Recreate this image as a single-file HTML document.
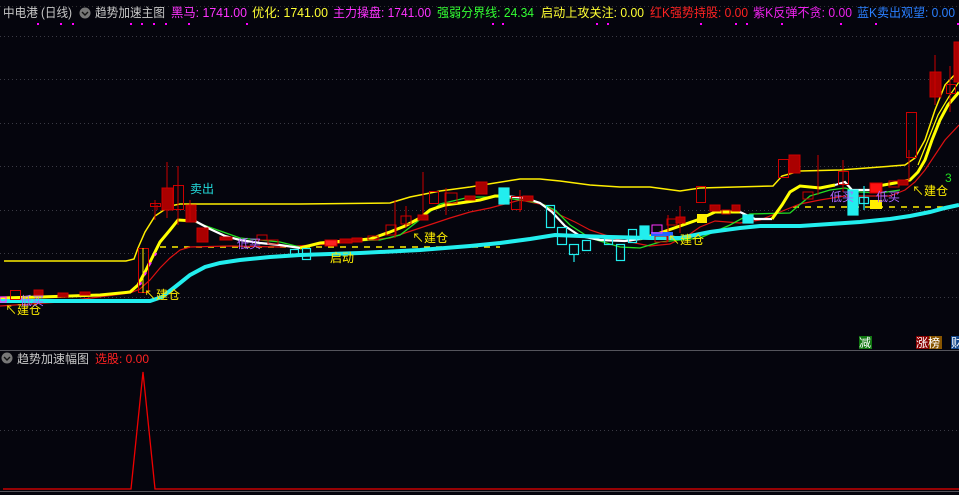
<!DOCTYPE html>
<html><head><meta charset="utf-8">
<style>
html,body{margin:0;padding:0;background:#05050d;}
body{width:959px;height:495px;overflow:hidden;position:relative;font-family:"Liberation Sans","Noto Sans CJK SC",sans-serif;}
svg{position:absolute;left:0;top:0;}
text{font-family:"Liberation Sans","Noto Sans CJK SC",sans-serif;}
</style></head><body>
<svg width="959" height="495" viewBox="0 0 959 495">
<rect width="959" height="495" fill="#05050d"/>
<g stroke="#3a3a44" stroke-dasharray="1 3" stroke-width="1">
<line x1="0" y1="36.5" x2="959" y2="36.5"/><line x1="0" y1="79.5" x2="959" y2="79.5"/>
<line x1="0" y1="123.5" x2="959" y2="123.5"/><line x1="0" y1="166.5" x2="959" y2="166.5"/>
<line x1="0" y1="210.5" x2="959" y2="210.5"/><line x1="0" y1="253.5" x2="959" y2="253.5"/>
<line x1="0" y1="297.5" x2="959" y2="297.5"/><line x1="0" y1="430.5" x2="959" y2="430.5"/>
</g>
<line x1="0" y1="350.5" x2="959" y2="350.5" stroke="#55555c"/>
<line x1="0" y1="491.5" x2="959" y2="491.5" stroke="#55555c"/>
<line x1="0" y1="6.5" x2="959" y2="6.5" stroke="#333" stroke-dasharray="1 3"/>

<g font-size="12.5" lengthAdjust="spacingAndGlyphs">
<text x="3" y="17" fill="#c8c8c8" textLength="69" lengthAdjust="spacingAndGlyphs">中电港 (日线)</text>
<circle cx="85" cy="13" r="5.5" fill="#777"/><path d="M82 12 l3 3 l3 -3" stroke="#111" stroke-width="1.4" fill="none"/>
<text x="95" y="17" fill="#c8c8c8" textLength="70" lengthAdjust="spacingAndGlyphs">趋势加速主图</text>
<text x="171" y="17" fill="#ff33ff" textLength="76" lengthAdjust="spacingAndGlyphs">黑马: 1741.00</text>
<text x="252" y="17" fill="#ffff33" textLength="76" lengthAdjust="spacingAndGlyphs">优化: 1741.00</text>
<text x="333" y="17" fill="#ff33ff" textLength="98" lengthAdjust="spacingAndGlyphs">主力操盘: 1741.00</text>
<text x="437" y="17" fill="#33ff33" textLength="97" lengthAdjust="spacingAndGlyphs">强弱分界线: 24.34</text>
<text x="541" y="17" fill="#ffff33" textLength="103" lengthAdjust="spacingAndGlyphs">启动上攻关注: 0.00</text>
<text x="650" y="17" fill="#ff2222" textLength="98" lengthAdjust="spacingAndGlyphs">红K强势持股: 0.00</text>
<text x="753" y="17" fill="#ee22ee" textLength="99" lengthAdjust="spacingAndGlyphs">紫K反弹不贪: 0.00</text>
<text x="857" y="17" fill="#2a7fff" textLength="98" lengthAdjust="spacingAndGlyphs">蓝K卖出观望: 0.00</text>
</g>
<g fill="#ff00ff">
<rect x="37" y="23" width="2" height="2"/><rect x="60" y="23" width="2" height="2"/><rect x="72" y="23" width="2" height="2"/>
<rect x="130" y="23" width="2" height="2"/><rect x="141" y="23" width="2" height="2"/><rect x="153" y="23" width="2" height="2"/><rect x="165" y="23" width="2" height="2"/>
<rect x="188" y="23" width="2" height="2"/><rect x="246" y="23" width="2" height="2"/>
<rect x="492" y="23" width="2" height="2"/><rect x="502" y="23" width="2" height="2"/><rect x="596" y="23" width="2" height="2"/><rect x="607" y="23" width="2" height="2"/>
<rect x="700" y="23" width="2" height="2"/><rect x="735" y="23" width="2" height="2"/><rect x="746" y="23" width="2" height="2"/><rect x="781" y="23" width="2" height="2"/>
<rect x="840" y="23" width="2" height="2"/><rect x="875" y="23" width="2" height="2"/><rect x="957" y="23" width="2" height="2"/>
</g>

<path d="M160 247 H500" stroke="#ffee00" stroke-width="1.5" stroke-dasharray="6 6"/>
<path d="M793 207 H959" stroke="#ffee00" stroke-width="1.5" stroke-dasharray="6 6"/>

<polyline fill="none" stroke="#ffee00" stroke-width="1.5" points="4,261 126,261 134,259 138,248 145,232 155,216 170,206 180,204 300,204 390,203 410,197 440,191 470,187 520,179 540,179 560,181 590,185 620,187 650,187 680,191 700,188 773,186 782,176 800,171 840,170 880,167 905,165 915,158 925,140 935,110 945,85 959,70"/>

<polyline fill="none" stroke="#dd1111" stroke-width="1.2" points="0,306 60,302 130,293 140,289 150,280 160,268 170,258 180,250 190,247 230,246 280,247 330,244 360,241 390,238 420,228 450,218 470,212 490,208 520,200 545,205 560,215 575,222 590,230 620,240 650,246 670,244 690,234 700,227 715,221 740,223 760,220 780,212 800,204 820,200 845,196 870,196 890,196 905,190 915,182 925,170 935,155 945,140 959,125"/>

<polyline fill="none" stroke="#22dd22" stroke-width="1.3" points="195,222 240,238 280,242 300,247 320,243 350,241 380,240 400,235 440,204 470,197 500,197 540,203 555,210 570,225 590,238 620,247 640,248 660,242 700,238 730,225 750,214 790,213 810,196 830,190 845,188 860,192 880,193 900,190"/>

<polyline fill="none" stroke="#ffff00" stroke-width="3" points="0,298 40,297 100,295 130,292 138,285 145,272 152,258 160,242 170,230 178,220 195,221"/>
<polyline fill="none" stroke="#ff33ff" stroke-width="2" stroke-dasharray="3 8" points="140,285 150,264 158,250"/>
<polyline fill="none" stroke="#ffffff" stroke-width="2.2" points="195,221 210,229 225,236 240,240 260,243 280,245 300,248"/>
<polyline fill="none" stroke="#ffff00" stroke-width="3" points="300,248 320,243 345,241 370,239 390,232 405,226 420,218 430,210 445,205 460,203 480,200 495,196 505,196"/>
<polyline fill="none" stroke="#ffffff" stroke-width="2.2" points="505,196 525,198 540,203 552,212 565,226 580,236 600,240 625,241 640,239"/>
<polyline fill="none" stroke="#ffff00" stroke-width="3" points="640,239 660,233 680,226 700,219 715,212 740,212"/>
<polyline fill="none" stroke="#ffffff" stroke-width="2.2" points="740,212 755,219 772,219"/>
<polyline fill="none" stroke="#ffff00" stroke-width="3" points="772,219 782,205 790,192 800,186 820,188 835,185"/>
<polyline fill="none" stroke="#ffffff" stroke-width="2.2" points="835,185 845,182 852,190 870,190 878,186"/>
<polyline fill="none" stroke="#ffff00" stroke-width="3" points="878,186 895,183 910,180 918,172 925,160 932,140 940,120 948,105 959,92"/>
<polyline fill="none" stroke="#ffff00" stroke-width="1.2" points="918,165 928,140 938,115 950,95 959,82"/>

<polyline fill="none" stroke="#22eeee" stroke-width="4" points="0,301 150,301 162,297 175,287 190,275 205,267 220,263 240,260 270,257 300,255 330,254 360,253 420,250 470,246 500,243 530,239 555,235 580,236 610,237 650,238 680,238 710,232 740,228 760,226 800,226 830,224 860,222 890,219 910,216 930,212 945,208 959,205"/>

<g stroke="#cc0000" stroke-width="1" fill="none">
<line x1="157" y1="205" x2="157" y2="210"/>
<line x1="167" y1="162" x2="167" y2="218"/><rect x="162" y="188" width="11" height="22" fill="#aa0000"/>
<line x1="178" y1="166" x2="178" y2="225"/><rect x="173.5" y="185.5" width="10" height="24"/>
<rect x="150.5" y="203.5" width="10" height="3"/><line x1="155" y1="200" x2="155" y2="220" stroke="#cc0000"/>
<rect x="186" y="205" width="10" height="17" fill="#aa0000"/><line x1="190" y1="200" x2="190" y2="222"/>
<rect x="197" y="228" width="11" height="14" fill="#aa0000"/>
<rect x="138.5" y="248.5" width="10" height="44"/><line x1="143" y1="248" x2="143" y2="293" stroke="#ffee00"/>
<rect x="80" y="292" width="10" height="3" fill="#aa0000"/><rect x="58" y="293" width="10" height="4" fill="#aa0000"/>
<rect x="10.5" y="290.5" width="10" height="9"/><rect x="34" y="290" width="9" height="5" fill="#aa0000"/>
<rect x="220" y="237" width="12" height="3" fill="#aa0000"/><rect x="257" y="235" width="10" height="5"/>
<rect x="268" y="240" width="10" height="4"/><rect x="325" y="240" width="12" height="6" fill="#ff2222"/>
<rect x="340" y="239" width="12" height="4" fill="#aa0000"/><rect x="352" y="238" width="10" height="4" fill="#aa0000"/>
<rect x="368" y="236" width="10" height="4"/><rect x="386" y="225" width="10" height="10"/>
<line x1="395" y1="200" x2="395" y2="238"/><rect x="401" y="216" width="10" height="8"/><line x1="406" y1="206" x2="406" y2="228"/>
<rect x="418" y="215" width="10" height="5" fill="#aa0000"/><rect x="429.5" y="191.5" width="9" height="12"/><line x1="423" y1="172" x2="423" y2="216"/>
<line x1="446" y1="188" x2="446" y2="215"/><rect x="445" y="193" width="12" height="10"/><rect x="465" y="196" width="10" height="4" fill="#aa0000"/>
<rect x="476" y="182" width="11" height="12" fill="#aa0000"/><rect x="511.5" y="196.5" width="10" height="13"/><line x1="520" y1="190" x2="520" y2="212"/>
<rect x="523" y="196" width="10" height="5" fill="#aa0000"/>
<rect x="655" y="236" width="12" height="6"/><line x1="668" y1="215" x2="668" y2="242"/><rect x="667" y="219" width="10" height="6"/>
<line x1="680" y1="206" x2="680" y2="233"/><rect x="676" y="217" width="9" height="6" fill="#aa0000"/>
<rect x="696.5" y="186.5" width="9" height="16"/><rect x="710" y="205" width="10" height="6" fill="#aa0000"/><rect x="722" y="210" width="8" height="4"/>
<rect x="732" y="205" width="8" height="6" fill="#aa0000"/>
<rect x="778.5" y="159.5" width="10" height="18"/><rect x="789" y="155" width="11" height="18" fill="#aa0000"/>
<line x1="818" y1="155" x2="818" y2="195"/><rect x="803" y="192" width="10" height="7"/><rect x="838.5" y="171.5" width="10" height="13"/><line x1="843" y1="160" x2="843" y2="192"/>
<rect x="870" y="183" width="12" height="10" fill="#ff1111"/><rect x="889" y="181" width="10" height="6"/><rect x="898" y="180" width="10" height="5" fill="#aa0000"/>
<rect x="906.5" y="112.5" width="10" height="45"/><line x1="909" y1="150" x2="909" y2="180"/>
<rect x="930" y="72" width="11" height="25" fill="#aa0000"/><line x1="935" y1="55" x2="935" y2="105"/>
<rect x="946.5" y="84.5" width="9" height="9"/><line x1="950" y1="66" x2="950" y2="112"/>
<rect x="954" y="42" width="5" height="40" fill="#aa0000"/>
</g>
<g stroke="#22eeee" fill="none" stroke-width="1.2">
<rect x="290.5" y="249.5" width="8" height="6"/><rect x="302.5" y="248.5" width="8" height="11"/>
<rect x="499" y="188" width="10" height="16" fill="#22eeee"/>
<rect x="546.5" y="205.5" width="8" height="22"/><rect x="557.5" y="227.5" width="9" height="17"/>
<rect x="569.5" y="244.5" width="9" height="10"/><line x1="574" y1="254" x2="574" y2="262"/><rect x="582.5" y="240.5" width="8" height="10"/>
<rect x="604.5" y="238.5" width="8" height="6"/><rect x="616.5" y="244.5" width="8" height="16"/>
<rect x="628.5" y="229.5" width="8" height="13"/><rect x="640" y="226" width="9" height="10" fill="#22eeee"/>
<rect x="743" y="215" width="10" height="8" fill="#22eeee"/><rect x="848" y="190" width="10" height="25" fill="#22eeee"/>
<rect x="859.5" y="197.5" width="9" height="6"/><line x1="864" y1="186" x2="864" y2="210"/>
<rect x="0" y="297" width="6" height="5" stroke="#ff33ff"/>
</g>
<rect x="651" y="232" width="22" height="4" fill="#2266ff"/>
<rect x="697" y="214" width="10" height="9" fill="#ffee00"/>
<rect x="870" y="200" width="12" height="9" fill="#ffee00"/>
<rect x="652" y="225" width="10" height="8" fill="none" stroke="#ff33ff"/>

<g font-size="12">
<text x="190" y="193" fill="#22dddd">卖出</text>
<text x="144" y="299" fill="#ffee00">↖建仓</text>
<text x="5" y="314" fill="#ffee00">↖建仓</text>
<text x="412" y="242" fill="#ffee00">↖建仓</text>
<text x="668" y="244" fill="#ffee00">↖建仓</text>
<text x="912" y="195" fill="#ffee00">↖建仓</text>
<text x="330" y="262" fill="#ffee00">启动</text>
<text x="237" y="248" fill="#aa66ff">低买</text>
<text x="830" y="201" fill="#aa66ff">低买</text>
<text x="876" y="201" fill="#aa66ff">低买</text>
<text x="945" y="182" fill="#22dd22">3</text>
<text x="20" y="305" fill="#aa66ff">低买</text>
</g>

<rect x="859" y="336" width="13" height="13" fill="#117711"/><text x="859" y="347" font-size="12" fill="#fff">减</text>
<rect x="916" y="336" width="13" height="13" fill="#880000"/><rect x="929" y="336" width="13" height="13" fill="#885500"/><text x="916" y="347" font-size="12" fill="#fff">涨榜</text>
<rect x="951" y="336" width="8" height="13" fill="#114488"/><text x="951" y="347" font-size="12" fill="#fff">财</text>

<circle cx="7" cy="358" r="5.5" fill="#777"/><path d="M4 357 l3 3 l3 -3" stroke="#111" stroke-width="1.4" fill="none"/>
<text x="17" y="363" font-size="12" fill="#c8c8c8" textLength="72" lengthAdjust="spacingAndGlyphs">趋势加速幅图</text>
<text x="95" y="363" font-size="12" fill="#ff2222" textLength="54" lengthAdjust="spacingAndGlyphs">选股: 0.00</text>
<polyline fill="none" stroke="#ee0000" stroke-width="1.3" points="3,489 131,489 143,372 155,489 959,489"/>
</svg>
</body></html>
